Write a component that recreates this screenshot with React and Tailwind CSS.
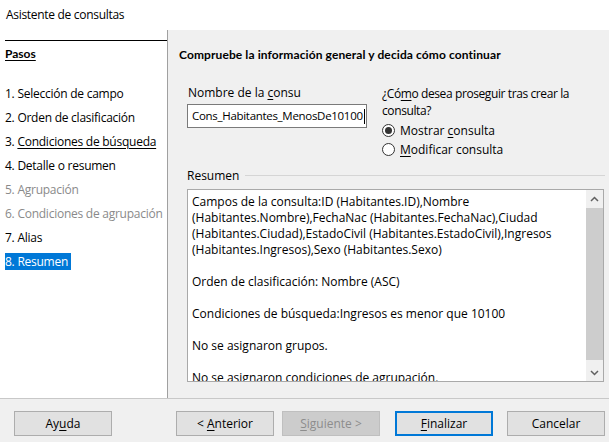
import React from "react";

const steps = [
  { label: "1. Selección de campo" },
  { label: "2. Orden de clasificación" },
  { label: "3. ", link: "Condiciones de búsqueda" },
  { label: "4. Detalle o resumen" },
  { label: "5. Agrupación", disabled: true },
  { label: "6. Condiciones de agrupación", disabled: true },
  { label: "7. Alias" },
  { label: "8. Resumen", active: true },
];

const summary = [
  "Campos de la consulta:ID (Habitantes.ID),Nombre",
  "(Habitantes.Nombre),FechaNac (Habitantes.FechaNac),Ciudad",
  "(Habitantes.Ciudad),EstadoCivil (Habitantes.EstadoCivil),Ingresos",
  "(Habitantes.Ingresos),Sexo (Habitantes.Sexo)",
  "",
  "Orden de clasificación: Nombre (ASC)",
  "",
  "Condiciones de búsqueda:Ingresos es menor que 10100",
  "",
  "No se asignaron grupos.",
  "",
  "No se asignaron condiciones de agrupación.",
];

function Radio({ checked, children }) {
  return (
    <div className="flex items-center h-[19px]">
      <span className="w-[13px] h-[13px] rounded-full border border-[#333333] bg-white flex items-center justify-center">
        {checked && <span className="w-[7px] h-[7px] rounded-full bg-[#333333]" />}
      </span>
      <span className="ml-[5px]">{children}</span>
    </div>
  );
}

function Button({ children, className = "", disabled, primary }) {
  return (
    <div
      className={`w-[98px] h-[25px] flex items-center justify-center ${
        disabled
          ? "bg-[#cccccc] border border-[#bfbfbf] text-[#8d8d8d]"
          : primary
          ? "bg-[#e1e1e1] border-2 border-[#0078d7] text-black"
          : "bg-[#e1e1e1] border border-[#adadad] text-black"
      } ${className}`}
    >
      {children}
    </div>
  );
}

function ChevronUp() {
  return (
    <svg width="9" height="6" viewBox="0 0 9 6">
      <path d="M1 5 L4.5 1.5 L8 5" fill="none" stroke="#606060" strokeWidth="1.5" />
    </svg>
  );
}

function ChevronDown() {
  return (
    <svg width="9" height="6" viewBox="0 0 9 6">
      <path d="M1 1 L4.5 4.5 L8 1" fill="none" stroke="#606060" strokeWidth="1.5" />
    </svg>
  );
}

export default function App() {
  return (
    <div className="w-[609px] h-[442px] flex flex-col bg-[#f0f0f0] text-[12px] text-black font-['Open_Sans',sans-serif] overflow-hidden">
      {/* Title bar */}
      <div className="h-[30px] bg-white flex items-center pl-[6px] shrink-0 tracking-[-0.3px]">
        Asistente de consultas
      </div>

      <div className="flex flex-1 min-h-0">
        {/* Steps */}
        <div className="w-[168px] bg-white border-r border-[#a0a0a0] flex flex-col shrink-0">
          <div className="mt-[10px] ml-[5px] h-px bg-black" />
          <div className="mt-[5px] ml-[5px] h-[16px] leading-[16px] font-['Lato',sans-serif] font-bold underline underline-offset-2">
            Pasos
          </div>
          <div className="mt-[19px] flex flex-col">
            {steps.map((s) => (
              <div key={s.label} className="h-[24px] flex items-center pl-[5px]">
                <span
                  className={`h-[17px] leading-[17px] pr-[3px] whitespace-nowrap tracking-[-0.25px] ${
                    s.active ? "bg-[#0078d7] text-white" : s.disabled ? "text-[#8a8a8a]" : ""
                  }`}
                >
                  {s.label}
                  {s.link && <span className="underline underline-offset-2">{s.link}</span>}
                </span>
              </div>
            ))}
          </div>
        </div>

        {/* Content */}
        <div className="flex-1 flex flex-col">
          <div className="mt-[17px] pl-[11px] h-[16px] leading-[16px] font-['Lato',sans-serif] font-bold whitespace-nowrap tracking-[0.1px]">
            Compruebe la información general y decida cómo continuar
          </div>

          <div className="mt-[22px] pl-[19px] h-[75px] flex">
            <div className="w-[195px] flex flex-col">
              <div className="h-[16px] leading-[16px] pl-px">
                Nombre de la <u className="underline-offset-2">c</u>onsu
              </div>
              <div className="mt-[3px] w-[180px] h-[24px] bg-white border border-[#7a7a7a] flex items-center pl-[4px] overflow-hidden">
                <span className="whitespace-nowrap text-[11.5px] tracking-[-0.3px]">Cons_Habitantes_MenosDe10100</span>
                <span className="w-px h-[15px] bg-black ml-px shrink-0" />
              </div>
            </div>
            <div className="flex flex-col">
              <div className="leading-[17px] tracking-[-0.4px]">
                ¿Có<u className="underline-offset-2">m</u>o desea proseguir tras crear la
                <br />
                consulta?
              </div>
              <div className="mt-[2px]">
                <Radio checked>
                  Mostrar <u className="underline-offset-2">c</u>onsulta
                </Radio>
                <Radio>
                  <u className="underline-offset-2">M</u>odificar consulta
                </Radio>
              </div>
            </div>
          </div>

          {/* Resumen group */}
          <div className="mt-[8px] pl-[19px] pr-[4px] h-[16px] flex items-center">
            <span className="leading-[16px]">Resumen</span>
            <span className="flex-1 h-px bg-[#d5d5d5] ml-[6px] -mt-[1px]" />
          </div>
          <div className="mt-[5px] ml-[19px] w-[417px] h-[193px] bg-white border border-[#a9a9a9] flex">
            <div className="flex-1 overflow-hidden pl-[4px] pt-[4px]">
              {summary.map((line, i) => (
                <div key={i} className="h-[16px] leading-[16px] whitespace-nowrap">
                  {line}
                </div>
              ))}
            </div>
            <div className="w-[17px] bg-[#f0f0f0] flex flex-col">
              <div className="h-[17px] flex items-center justify-center">
                <ChevronUp />
              </div>
              <div className="mt-px h-[152px] bg-[#cdcdcd]" />
              <div className="flex-1" />
              <div className="h-[17px] flex items-center justify-center">
                <ChevronDown />
              </div>
            </div>
          </div>
        </div>
      </div>

      {/* Buttons */}
      <div className="h-[44px] shrink-0 border-t border-[#c8c8c8] flex items-start pt-[12px] pl-[14px]">
        <Button>
          Ay<u className="underline-offset-2">u</u>da
        </Button>
        <Button className="ml-[64px]">
          &lt; <u className="underline-offset-2 ml-[3px]">A</u>nterior
        </Button>
        <Button className="ml-[8px]" disabled>
          <u className="underline-offset-2">S</u>iguiente &gt;
        </Button>
        <Button className="ml-[15px]" primary>
          <u className="underline-offset-2">F</u>inalizar
        </Button>
        <Button className="ml-[14px]">Cancelar</Button>
      </div>
    </div>
  );
}
